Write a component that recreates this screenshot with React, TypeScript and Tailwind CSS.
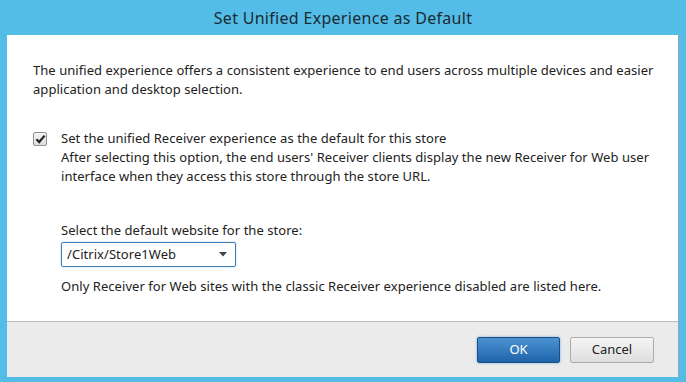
export default function App() {
  return (
    <div className="w-[686px] h-[382px] bg-[#53bde7] flex flex-col font-['Noto_Sans',sans-serif] text-[#222]">
      <div className="h-[35px] flex items-center justify-center text-[16px] tracking-[0.3px] text-[#1c2a33]">
        Set Unified Experience as Default
      </div>
      <div className="mx-[7px] w-[672px] h-[342px] flex flex-col border-r border-[#9aa5ab]">
        <div className="h-[287px] bg-white border-b border-[#b4bcc1] pl-[26px] pr-[8px] pt-[26px] text-[13px] leading-[19px] tracking-[0.05px]">
          <p>
            The unified experience offers a consistent experience to end users across multiple devices and easier application and desktop selection.
          </p>
          <div className="mt-[30px] flex">
            <div className="w-[14px] h-[14px] mt-[3px] shrink-0 border border-[#8f8f8f] rounded-[2px] bg-gradient-to-b from-[#f4f4f4] to-[#dcdcdc] flex items-center justify-center">
              <svg width="11" height="10" viewBox="0 0 11 10">
                <path d="M1.5 5.2 L4.2 8 L9.6 1.6" fill="none" stroke="#222" strokeWidth="2.2" />
              </svg>
            </div>
            <div className="ml-[14px] pr-[12px]">
              <div>Set the unified Receiver experience as the default for this store</div>
              <div>
                After selecting this option, the end users' Receiver clients display the new Receiver for Web user interface when they access this store through the store URL.
              </div>
              <div className="mt-[35px]">Select the default website for the store:</div>
              <div className="mt-[2px] w-[175px] h-[25px] border border-[#3f7fb5] rounded-[2px] shadow-[0_0_2px_#9cc6e8] flex items-center justify-between pl-[5px] pr-[8px]">
                <span>/Citrix/Store1Web</span>
                <svg width="8" height="5" viewBox="0 0 8 5">
                  <path d="M0 0 H8 L4 4.5 Z" fill="#444" />
                </svg>
              </div>
              <div className="mt-[10px]">
                Only Receiver for Web sites with the classic Receiver experience disabled are listed here.
              </div>
            </div>
          </div>
        </div>
        <div className="flex-1 bg-[#ebebeb] flex justify-end items-start pt-[15px] pr-[24px] gap-[10px] text-[13px]">
          <button className="w-[83px] h-[26px] rounded-[2px] border border-[#1c4f85] bg-gradient-to-b from-[#4c93d2] to-[#1f64ab] text-white shadow-[0_0_3px_#7fb1dc]">
            OK
          </button>
          <button className="w-[84px] h-[26px] rounded-[2px] border border-[#acacac] bg-gradient-to-b from-[#f5f5f5] to-[#dedede] text-[#222]">
            Cancel
          </button>
        </div>
      </div>
    </div>
  )
}
